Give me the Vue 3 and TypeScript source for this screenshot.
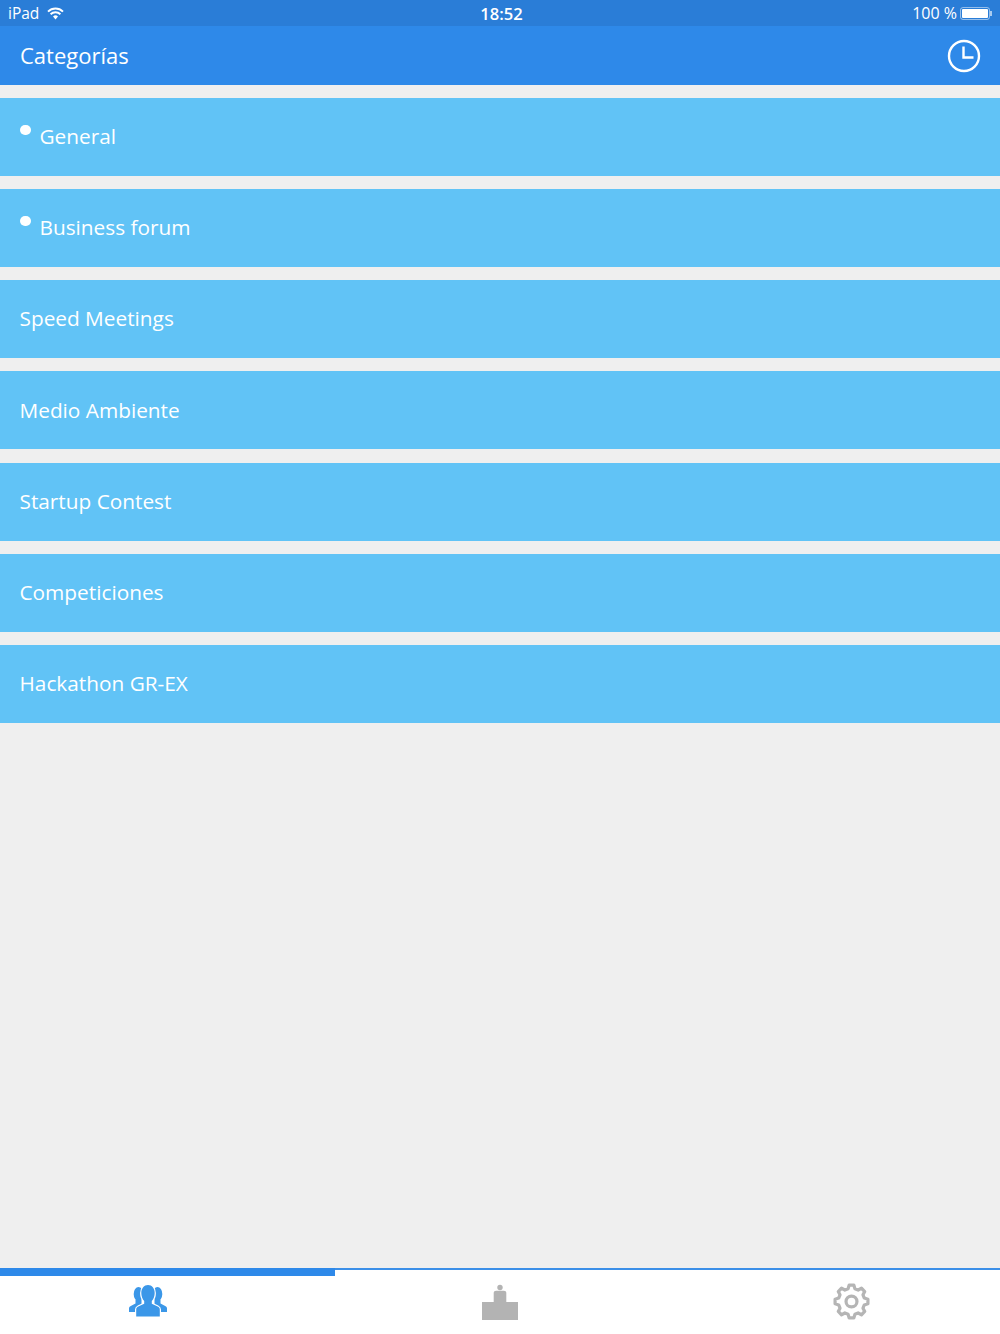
<script setup lang="ts">
interface Category {
  name: string
  unread?: boolean
}

const categories: Category[] = [
  { name: 'General', unread: true },
  { name: 'Business forum', unread: true },
  { name: 'Speed Meetings' },
  { name: 'Medio Ambiente' },
  { name: 'Startup Contest' },
  { name: 'Competiciones' },
  { name: 'Hackathon GR-EX' }
]

// 8 teeth around (20, 20), one of them pointing straight up
function gearPoints(): string {
  const pts: string[] = []
  const rim: [number, number][] = [[-15, 13.6], [-8, 17], [8, 17], [15, 13.6]]
  for (let i = 0; i < 8; i++) {
    for (const [offset, radius] of rim) {
      const a = ((i * 45 + offset - 90) * Math.PI) / 180
      pts.push(`${(20 + radius * Math.cos(a)).toFixed(2)},${(20 + radius * Math.sin(a)).toFixed(2)}`)
    }
  }
  return pts.join(' ')
}
</script>

<template>
  <div class="screen">
    <div class="status-bar">
      <div class="status-left">
        <span>iPad</span>
        <svg class="wifi" width="17" height="13" viewBox="0 0 17 13">
          <path d="M1 4.6a10.6 10.6 0 0 1 15 0" fill="none" stroke="#fff" stroke-width="1.9" />
          <path d="M3.6 7.2a7 7 0 0 1 9.8 0" fill="none" stroke="#fff" stroke-width="1.9" />
          <path d="M6 9.6a3.5 3.5 0 0 1 5 0L8.5 12.4z" fill="#fff" />
        </svg>
      </div>
      <span class="status-time">18:52</span>
      <div class="status-right">
        <span>100 %</span>
        <div class="battery">
          <div class="battery-body"><div class="battery-fill"></div></div>
          <div class="battery-tip"></div>
        </div>
      </div>
    </div>

    <header class="app-header">
      <span class="app-title">Categorías</span>
      <svg width="34" height="34" viewBox="0 0 34 34" fill="none" stroke="#fff" stroke-width="2.4">
        <circle cx="17" cy="17" r="15" />
        <path d="M16.500 7.500V18.500H26.500" />
      </svg>
    </header>

    <main class="category-list">
      <div v-for="cat in categories" :key="cat.name" class="category-row">
        <span v-if="cat.unread" class="unread-dot"></span>
        <span class="category-name">{{ cat.name }}</span>
      </div>
    </main>

    <nav class="tab-bar">
      <div class="tab-indicator"></div>
      <div class="tab">
        <svg class="icon-people" width="38" height="32" viewBox="0 0 38 32" fill="#3b97e8">
          <ellipse cx="9.500" cy="9" rx="4.800" ry="7" />
          <path d="M6.500 14.500h6v5L8 23.500V27H0v-3.500c0-1.300.6-2 1.800-2.600l4.700-2.400z" />
          <ellipse cx="28.500" cy="9" rx="4.800" ry="7" />
          <path d="M31.500 14.500h-6v5l4.500 4V27h8v-3.500c0-1.300-.6-2-1.800-2.600l-4.700-2.400z" />
          <path d="M19 0c3.900 0 6.700 3.400 6.700 8 0 3.200-1.200 6.200-2.900 8v2.800l5.900 2.800c1.400.7 2.100 1.500 2.100 3V31.500H7.200v-6.900c0-1.500.7-2.300 2.100-3l5.900-2.800V16c-1.700-1.800-2.900-4.800-2.900-8 0-4.600 2.800-8 6.700-8z" stroke="#fff" stroke-width="2.400" paint-order="stroke" />
        </svg>
      </div>
      <div class="tab">
        <svg width="36" height="36" viewBox="0 0 36 36" fill="#b3b3b3">
          <circle cx="18" cy="3.500" r="2.700" />
          <path d="M11.700 9c0-1.600 1-2.300 2.400-2.300h7.800c1.400 0 2.400.7 2.400 2.300v9H11.700z" />
          <path d="M0 18h36v18H0z" />
        </svg>
      </div>
      <div class="tab">
        <svg width="39" height="39" viewBox="0 0 40 40" fill="none" stroke="#b5b5b5" stroke-width="3.300" stroke-linejoin="round">
          <polygon :points="gearPoints()" />
          <circle cx="20" cy="20" r="5.600" />
        </svg>
      </div>
    </nav>
  </div>
</template>

<style scoped>
.screen {
  height: 1334px;
  display: flex;
  flex-direction: column;
  background: #efefef;
  font-family: 'Open Sans', sans-serif;
  color: #fff;
}

.status-bar {
  height: 26px;
  display: grid;
  grid-template-columns: 1fr auto 1fr;
  align-items: center;
  padding: 0 8px;
  background: #2a7dd7;
  font-size: 15.5px;
}

.status-left,
.status-right {
  display: flex;
  align-items: center;
}

.status-left {
  gap: 8px;
}

.status-right {
  justify-content: flex-end;
  gap: 3px;
}

.status-right span {
  font-size: 16px;
}

.status-time {
  font-size: 16.5px;
  font-weight: 600;
  padding-left: 3px;
}

.battery {
  display: flex;
  align-items: center;
}

.battery-body {
  width: 30px;
  height: 13px;
  padding: 1px;
  border: 1px solid rgba(255, 255, 255, 0.5);
  border-radius: 3px;
  box-sizing: border-box;
}

.battery-fill {
  height: 100%;
  background: #fff;
  border-radius: 1px;
}

.battery-tip {
  width: 2px;
  height: 5px;
  background: rgba(255, 255, 255, 0.6);
}

.app-header {
  height: 59px;
  display: flex;
  align-items: center;
  justify-content: space-between;
  padding: 0 19px 0 20px;
  background: #2e89e9;
}

.app-title {
  font-size: 22px;
  margin-top: -2px;
}

.category-list {
  flex: 1;
  display: flex;
  flex-direction: column;
  gap: 13.17px;
  padding-top: 13px;
}

.category-row {
  height: 78px;
  display: flex;
  align-items: center;
  padding-left: 20px;
  background: #61c3f6;
}

.unread-dot {
  width: 10.5px;
  height: 10.5px;
  margin: -14px 9.5px 0 0;
  border-radius: 50%;
  background: #fff;
}

.category-name {
  font-size: 20.8px;
  margin: -1.66px 0 0 -0.5px;
}

.tab-bar {
  position: relative;
  height: 64px;
  display: grid;
  grid-template-columns: repeat(3, 1fr);
  column-gap: 56px;
  background: #fff;
  border-top: 2px solid #3b8fe8;
}

.tab-indicator {
  position: absolute;
  top: -2px;
  left: 0;
  width: 335px;
  height: 8px;
  background: #2e89e9;
}

.tab {
  display: flex;
  align-items: center;
  justify-content: center;
}

.icon-people {
  margin: 0 1px 2px 0;
}

.tab:last-child svg {
  margin: 0 2px 2px 0;
}
</style>

<style>
html,
body {
  margin: 0;
}
</style>
